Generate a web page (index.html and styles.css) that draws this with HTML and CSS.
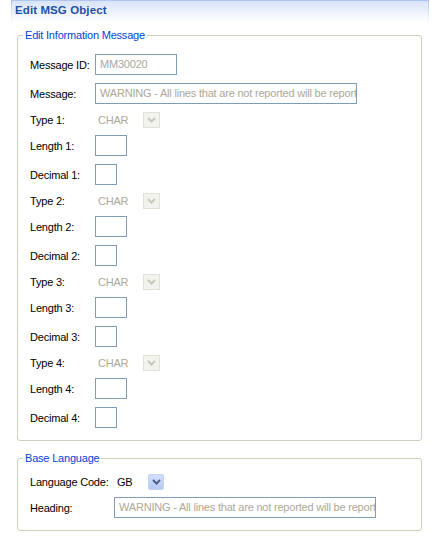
FILE: index.html
```html
<!DOCTYPE html>
<html>
<head>
<meta charset="utf-8">
<link rel="stylesheet" href="styles.css">
</head>
<body>
<div class="header"><span class="title">Edit MSG Object</span></div>

<fieldset class="group g1">
  <legend>Edit Information Message</legend>
  <div class="form">
    <div class="row"><span class="lbl">Message ID:</span><div class="input w-id">MM30020</div></div>
    <div class="row"><span class="lbl">Message:</span><div class="input w-msg">WARNING - All lines that are not reported will be reported</div></div>
    <div class="row short"><span class="lbl">Type 1:</span><div class="combo c-type"><span class="ctext dis">CHAR</span><span class="btn dis"><svg width="9" height="6" viewBox="0 0 9 6"><path d="M1 1 L4.5 4.5 L8 1" fill="none" stroke-width="2"/></svg></span></div></div>
    <div class="row"><span class="lbl">Length 1:</span><div class="input w-len"></div></div>
    <div class="row"><span class="lbl">Decimal 1:</span><div class="input w-dec"></div></div>
    <div class="row short"><span class="lbl">Type 2:</span><div class="combo c-type"><span class="ctext dis">CHAR</span><span class="btn dis"><svg width="9" height="6" viewBox="0 0 9 6"><path d="M1 1 L4.5 4.5 L8 1" fill="none" stroke-width="2"/></svg></span></div></div>
    <div class="row"><span class="lbl">Length 2:</span><div class="input w-len"></div></div>
    <div class="row"><span class="lbl">Decimal 2:</span><div class="input w-dec"></div></div>
    <div class="row short"><span class="lbl">Type 3:</span><div class="combo c-type"><span class="ctext dis">CHAR</span><span class="btn dis"><svg width="9" height="6" viewBox="0 0 9 6"><path d="M1 1 L4.5 4.5 L8 1" fill="none" stroke-width="2"/></svg></span></div></div>
    <div class="row"><span class="lbl">Length 3:</span><div class="input w-len"></div></div>
    <div class="row"><span class="lbl">Decimal 3:</span><div class="input w-dec"></div></div>
    <div class="row short"><span class="lbl">Type 4:</span><div class="combo c-type"><span class="ctext dis">CHAR</span><span class="btn dis"><svg width="9" height="6" viewBox="0 0 9 6"><path d="M1 1 L4.5 4.5 L8 1" fill="none" stroke-width="2"/></svg></span></div></div>
    <div class="row"><span class="lbl">Length 4:</span><div class="input w-len"></div></div>
    <div class="row"><span class="lbl">Decimal 4:</span><div class="input w-dec"></div></div>
  </div>
</fieldset>

<fieldset class="group g2">
  <legend>Base Language</legend>
  <div class="form">
    <div class="row short"><span class="lbl lbl2">Language Code:</span><div class="combo c-lang"><span class="ctext">GB</span><span class="btn on"><svg width="9" height="6" viewBox="0 0 9 6"><path d="M1 1 L4.5 4.5 L8 1" fill="none" stroke-width="2"/></svg></span></div></div>
    <div class="row"><span class="lbl lbl2">Heading:</span><div class="input w-msg">WARNING - All lines that are not reported will be reported</div></div>
  </div>
</fieldset>
</body>
</html>
```

FILE: styles.css
```css
html, body {
  margin: 0;
  padding: 0;
  background: #ffffff;
}

body {
  font-family: "Liberation Sans", Arial, sans-serif;
  font-size: 11px;
  letter-spacing: -0.2px;
  color: #000000;
}

.header {
  margin-left: 11px;
  width: 418px;
  height: 22px;
  box-sizing: border-box;
  border: 1px solid;
  border-bottom: none;
  border-image: linear-gradient(#aec4ee, #ffffff) 1;
  background: linear-gradient(#d8e3f8, #ffffff);
  padding-left: 3px;
  display: flex;
  align-items: center;
}

.title {
  font-weight: bold;
  font-size: 11.5px;
  letter-spacing: 0.1px;
  color: #2350a0;
  margin-top: -3px;
}

.group {
  width: 405px;
  box-sizing: border-box;
  margin: 0 0 0 17px;
  border: 1px solid #d0d0bf;
  border-radius: 3px;
  padding: 12px 12px 12px 12px;
  min-width: 0;
}

.g1 {
  margin-top: 6px;
}

.g2 {
  margin-top: 10px;
  padding-top: 9px;
}

legend {
  color: #0046d5;
  line-height: 14px;
  padding: 0 2px;
  margin-left: -7px;
}

.form {
  display: flex;
  flex-direction: column;
  gap: 8px;
}

.row {
  display: flex;
  align-items: center;
  height: 21px;
}

.row.short {
  height: 15px;
}

.lbl {
  width: 65px;
  flex-shrink: 0;
}

.lbl2 {
  width: 84px;
}

.input {
  height: 21px;
  box-sizing: border-box;
  border: 1px solid #7f9db9;
  padding-left: 4px;
  line-height: 19px;
  color: #aca899;
  white-space: nowrap;
  overflow: hidden;
  background: #ffffff;
}

.w-id { width: 82px; }
.w-msg { width: 262px; }
.w-len { width: 32px; }
.w-dec { width: 22px; }

.combo {
  display: flex;
  align-items: center;
  justify-content: space-between;
  padding-left: 3px;
  box-sizing: border-box;
}

.c-type { width: 65px; }
.c-lang { width: 50px; }

.ctext.dis {
  color: #aca899;
}

.btn {
  display: flex;
  align-items: center;
  justify-content: center;
  box-sizing: border-box;
}

.btn.dis {
  width: 17px;
  height: 16px;
  border: 1px solid #e2e1d8;
  background: #f3f3ee;
}

.btn.dis path {
  stroke: #c9c7b8;
}

.btn.on {
  width: 16px;
  height: 16px;
  border: 1px solid #c3d3f6;
  border-radius: 2px;
  background: linear-gradient(#d3defb, #b5c9f5);
}

.btn.on path {
  stroke: #4d6185;
}
```
